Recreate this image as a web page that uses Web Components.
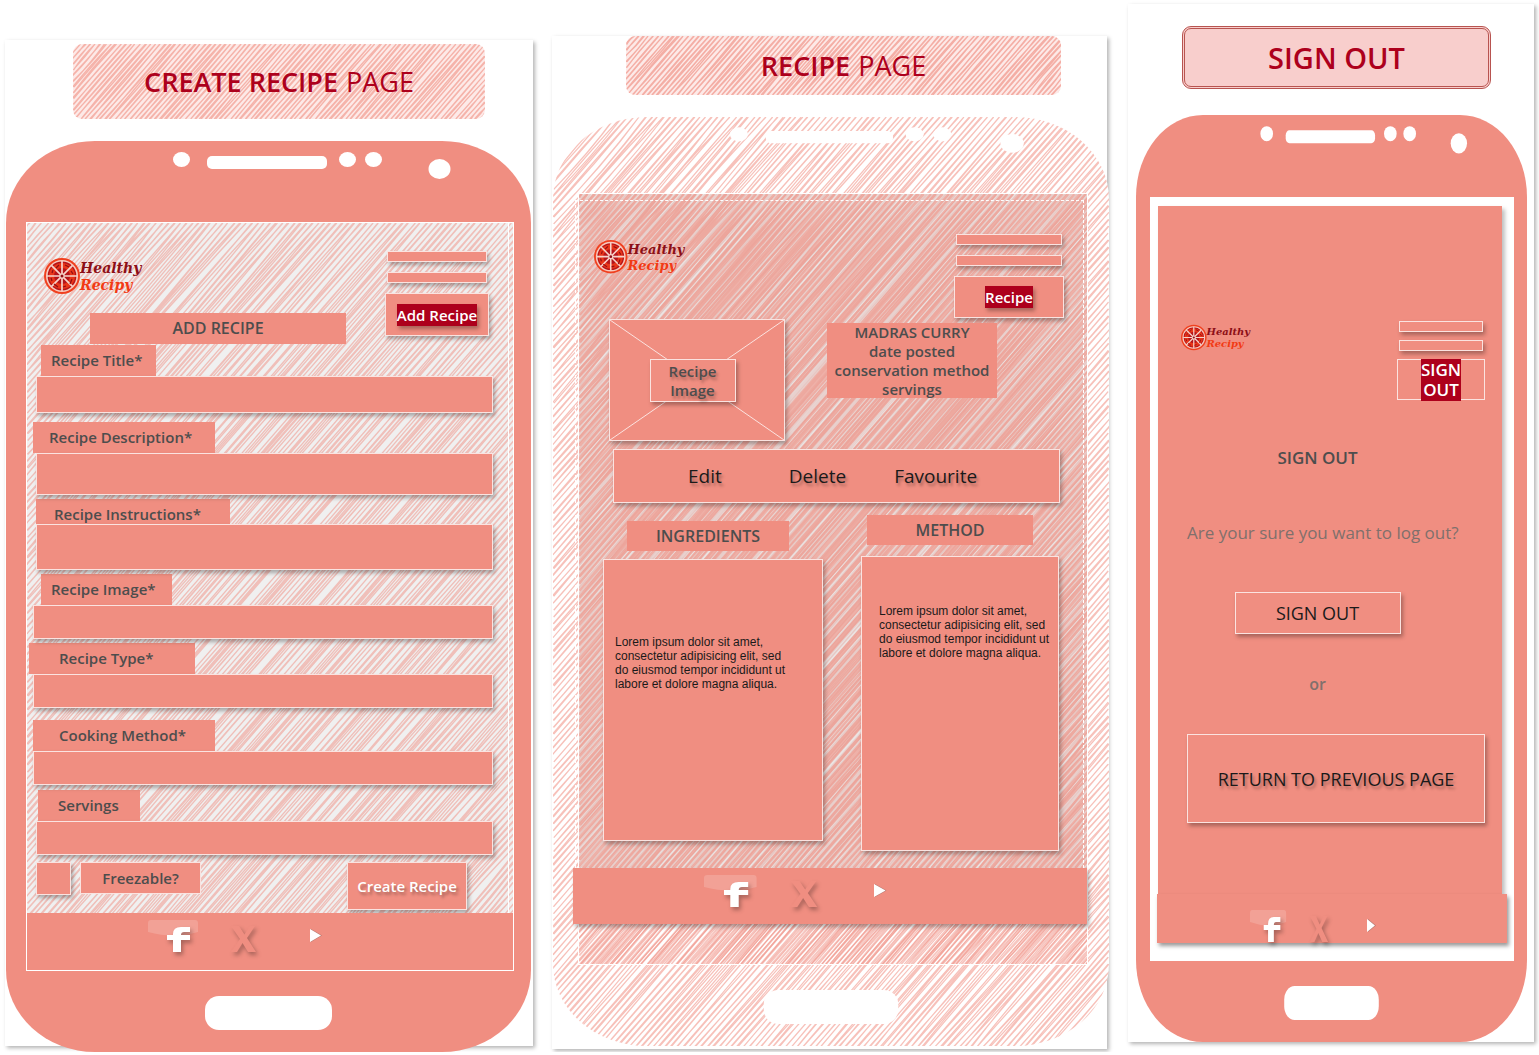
<!DOCTYPE html>
<html lang="en">
<head>
<meta charset="utf-8">
<title>Healthy Recipy wireframes</title>
<style>
  :root {
    --salmon: #f08e81;
    --red: #ad001c;
    --ink: #4d4d4d;
    --line: #fbe3e0;
    --drop: 2px 3px 4px rgba(0, 0, 0, .3);
    --text-drop: 2px 3px 3px rgba(0, 0, 0, .3);
  }
  body { margin: 0; background: #fff; font-family: "Open Sans", "Noto Sans", sans-serif; color: var(--ink); }
  main { display: grid; grid-template-columns: minmax(0, 542fr) minmax(0, 580fr) minmax(0, 417fr); align-items: start; }
</style>
</head>
<body>
<main>
  <create-board></create-board>
  <recipe-board></recipe-board>
  <signout-board></signout-board>
</main>

<script>
const define = (name, html, setup) => {
  const template = document.createElement('template');
  template.innerHTML = html;
  customElements.define(name, class extends HTMLElement {
    constructor() {
      super();
      this.attachShadow({ mode: 'open' }).append(template.content.cloneNode(true));
    }
    connectedCallback() { if (setup) setup(this, this.shadowRoot); }
  });
};

/* Sketchy diagonal shading that fills its positioned parent. */
define('hatch-fill', `
  <style>
    :host { position: absolute; inset: 0; overflow: hidden; border-radius: inherit; display: block; z-index: 0; pointer-events: none; }
    svg { width: 100%; height: 100%; display: block; }
  </style>
  <svg aria-hidden="true" fill="none" preserveAspectRatio="xMinYMin slice"><path/></svg>`,
  (host, root) => {
    const num = (name, fallback) => Number(host.getAttribute(name) || fallback);
    const w = num('w', 400), h = num('h', 80), step = num('step', 5), strokes = num('strokes', 2);
    let seed = num('seed', 7);
    const rnd = () => { seed = (seed * 16807) % 2147483647; return seed / 2147483647 - 0.5; };
    const slope = 0.87;
    const svg = root.querySelector('svg'), path = root.querySelector('path');
    svg.setAttribute('viewBox', `0 0 ${w} ${h}`);
    let d = '';
    for (let c = step / 2; c < w + h * slope; c += step) {
      const top = c > w ? (c - w) / slope : 0;
      const bottom = Math.min(h, c / slope);
      const x1 = c - top * slope, x2 = c - bottom * slope;
      const bow = Math.min(num('bow', 16), (bottom - top) / 10 + 2);
      for (let k = 0; k < strokes; k++) {
        const a = [x1 + rnd() * 2, top], b = [x2 + rnd() * 2, bottom];
        const m = [(x1 + x2) / 2 + rnd() * bow, (top + bottom) / 2];
        d += `M${a[0].toFixed(1)} ${a[1].toFixed(1)}Q${m[0].toFixed(1)} ${m[1].toFixed(1)} ${b[0].toFixed(1)} ${b[1].toFixed(1)}`;
      }
    }
    path.setAttribute('d', d);
    path.setAttribute('stroke', '#f08e81');
    path.setAttribute('stroke-width', host.getAttribute('weight') || '1');
    path.setAttribute('stroke-opacity', host.getAttribute('alpha') || '.7');
  });

/* Sheet of paper behind one mock-up. */
define('paper-sheet', `
  <style>
    :host { display: block; position: relative; padding: var(--pad); z-index: 0; }
    .sheet { position: absolute; inset: var(--sheet); background: #fff; box-shadow: 2px 2px 4px rgba(0,0,0,.3); z-index: -1; }
  </style>
  <div class="sheet"></div><slot></slot>`);

define('page-title', `
  <style>
    :host { display: block; position: relative; border-radius: 9px; margin: var(--m); }
    slot { border-radius: inherit; }
    h1 { position: relative; z-index: 1; margin: 0; height: var(--h); display: flex; align-items: center; justify-content: center; gap: 8px;
         font-size: var(--fs, 27px); font-weight: 400; line-height: 32px; color: var(--red); white-space: nowrap; }
    ::slotted(b) { font-weight: 600; }
  </style>
  <slot name="fill"></slot><h1><slot></slot></h1>`);

define('phone-frame', `
  <style>
    :host { display: block; position: relative; background: var(--body, var(--salmon)); border-radius: var(--rx) / 82px; }
    slot { border-radius: inherit; }
    .part { position: relative; z-index: 1; display: block; width: 100%; }
    .screen { position: relative; z-index: 1; margin: 0 var(--right) 0 var(--left); }
  </style>
  <slot name="fill"></slot>
  <svg class="part" id="top" viewBox="0 0 525 81" preserveAspectRatio="none" fill="#fff" aria-hidden="true">
    <ellipse cx="175.5" cy="18.5" rx="8.5" ry="7.5"/><rect x="201" y="15" width="120" height="13" rx="5"/>
    <ellipse cx="341.5" cy="18.5" rx="8.5" ry="7.5"/><ellipse cx="367.5" cy="18.5" rx="8.5" ry="7.5"/>
    <ellipse cx="433.5" cy="28" rx="11" ry="10"/>
  </svg>
  <div class="screen"><slot></slot></div>
  <svg class="part" viewBox="0 0 525 81" preserveAspectRatio="none" height="81" fill="#fff" aria-hidden="true">
    <rect x="199" y="25" width="127" height="34" rx="14"/>
  </svg>`,
  (host, root) => root.querySelector('#top').setAttribute('height', host.getAttribute('top') || 81));

define('site-logo', `
  <style>
    :host { display: block; width: var(--w, 100px); }
    svg { display: block; width: 100%; overflow: visible; }
    text { font: italic 700 14px "DejaVu Serif", serif; }
  </style>
  <svg viewBox="0 0 100 38" role="img" aria-label="Healthy Recipy">
    <circle cx="18" cy="19" r="18" fill="#f0401f"/><circle cx="18" cy="19" r="16" fill="#f7c9bd"/>
    <circle cx="18" cy="19" r="14.4" fill="#b5141a"/>
    <circle cx="18" cy="19" r="10.5" fill="none" stroke="#e8361a" stroke-width="5"/>
    <g stroke="#f7d3ca" stroke-width="1.7">
      <path d="M18 4v30M3 19h30M7.4 8.4l21.2 21.2M28.6 8.4L7.4 29.6"/>
    </g>
    <g fill="none" stroke="#8f0d14" stroke-width="1.2">
      <path d="M12 11l3-3M21 8l4 2M27 14l2 3M28 22l-2 5M22 29l-3 1M14 30l-4-3M8 24l-1-3M8 16l1-3"/>
    </g>
    <circle cx="18" cy="19" r="2.6" fill="#f7d3ca"/><circle cx="18" cy="19" r="1.5" fill="#8f0d14"/>
    <text x="36" y="16" fill="#8c0f17">Healthy</text>
    <text x="36" y="33" fill="#f23a14">Recipy</text>
  </svg>`);

define('nav-stack', `
  <style>
    :host { display: block; width: var(--w); }
    nav { display: flex; flex-direction: column; gap: var(--g, 10px); }
    a { box-sizing: border-box; border: 1px solid var(--line); background: var(--salmon); box-shadow: var(--drop); }
    .bar { height: 11px; margin: 0 2px; }
    .here { height: var(--h, 44px); display: flex; align-items: center; justify-content: center; text-align: center; text-decoration: none;
            color: #fff; font-size: var(--fs, 15px); font-weight: 600; line-height: 20px; box-shadow: var(--here-drop, var(--drop)); }
    span { background: var(--red); padding: 1px 0; box-shadow: var(--here-drop, var(--drop)); }
  </style>
  <nav><a class="bar" href="#home" aria-label="Home"></a><a class="bar" href="#list" aria-label="Recipes"></a>
  <a class="here" href="#here"><span><slot></slot></span></a></nav>`);

define('name-tag', `
  <style>
    :host { display: block; background: var(--salmon); text-align: center; font-size: 16px; font-weight: 600; line-height: 31px; }
    h2 { margin: 0; font: inherit; }
  </style>
  <h2><slot></slot></h2>`);

define('form-field', `
  <style>
    :host { display: block; margin: var(--gap) 20px 0 6px; }
    label { display: block; box-sizing: border-box; width: var(--lw); height: var(--lh, 31px); margin-left: var(--lx, 0px); padding-left: var(--tx);
            background: var(--salmon); font-size: 15px; font-weight: 600; line-height: 31px; white-space: nowrap; }
    .box { padding-left: var(--ix, 0px); }
    input { display: block; box-sizing: border-box; width: 100%; height: var(--ih, 34px); margin: 0; padding: 0 10px; position: relative;
            border: 1px solid var(--line); background: var(--salmon); box-shadow: var(--drop); font: inherit; color: var(--ink); outline: 0; }
  </style>
  <label for="f"></label><div class="box"><input id="f" type="text"></div>`,
  (host, root) => { root.querySelector('label').textContent = host.getAttribute('label'); });

define('social-strip', `
  <style>
    :host { display: block; position: relative; background: var(--salmon); box-shadow: var(--strip-drop, none); }
    footer { box-sizing: border-box; height: var(--h); padding: var(--pt, 7px) 0 0 var(--pl); }
    div { display: grid; grid-template-columns: 50fr 33fr 26fr 53fr 11fr; width: var(--w, 173px); height: 33px; }
    a { display: block; }
    a:nth-child(2) { grid-column: 3; } a:nth-child(3) { grid-column: 5; }
    svg { display: block; width: 100%; height: 33px; overflow: visible; filter: drop-shadow(2px 3px 2px rgba(0,0,0,.3)); }
    .tri { filter: drop-shadow(1px 0 0 rgba(90,90,90,.4)); }
    .gloss { filter: none; }
    a:first-child { display: grid; } a:first-child svg { grid-area: 1 / 1; }
  </style>
  <footer><div>
    <a href="#facebook" aria-label="Facebook">
      <svg class="gloss" viewBox="0 0 50 33" preserveAspectRatio="none"><path d="M3 0h44q3 0 3 3v9Q26 19 0 12V3q0-3 3-3z" fill="#fff" fill-opacity=".17"/></svg>
      <svg viewBox="0 0 50 33" preserveAspectRatio="none"><path d="M25 32V20h-6v-5h6v-1q0-7 8-7h9v5h-6q-3 0-3 3h9v5h-9v12z" fill="#fff"/></svg></a>
    <a href="#x" aria-label="X"><svg viewBox="0 0 26 33" preserveAspectRatio="none">
      <path d="M0 6h8l5.5 8.5L19 6h5l-8 12 9 14h-8l-5.5-9L6 32H0l9-13z" fill="#f08e81"/></svg></a>
    <a href="#play" aria-label="Play"><svg class="tri" viewBox="0 0 11 33" preserveAspectRatio="none">
      <path d="M0 9v13l11-6.5z" fill="#fff"/></svg></a>
  </div></footer>`);

define('create-board', `
  <style>
    :host { display: block; }
    paper-sheet { --pad: 44px 11px 0 6px; --sheet: 40px 9px 6px 5px; }
    page-title { --m: 0 46px 22px 67px; --h: 75px; background: #fdeae8; }
    phone-frame { --rx: 89px; --left: 20px; --right: 17px; }
    .screen { position: relative; border: 1px solid #fff; background: #f0f0f0; }
    .rule { position: absolute; top: 0; bottom: 0; right: 4px; border-right: 1px solid #fff; }
    .content { position: relative; z-index: 1; }
    header { display: flex; justify-content: space-between; align-items: flex-start; padding: 28px 24px 0 17px; height: 93px; }
    .left { padding-top: 6px; }
    name-tag { width: 256px; margin: 18px 0 0 46px; }
    nav-stack { --w: 104px; --h: 43px; }
    .last { display: flex; align-items: flex-start; gap: 9px; padding: 7px 46px 0 9px; height: 51px; box-sizing: border-box; margin-bottom: 7px; }
    .last > * { box-sizing: border-box; border: 1px solid var(--line); background: var(--salmon); font-size: 15px; font-weight: 600; }
    input { appearance: none; width: 35px; height: 33px; margin: 0; box-shadow: var(--drop); }
    label { width: 121px; line-height: 30px; text-align: center; }
    button { margin: 0 0 0 auto; width: 120px; height: 48px; padding: 0; font-family: inherit; color: #fff; box-shadow: var(--drop); text-shadow: var(--text-drop); white-space: nowrap; }
  </style>
  <paper-sheet>
    <page-title><hatch-fill slot="fill" w="412" h="75" step="5" weight="1.3" alpha=".6" bow="6" seed="11"></hatch-fill><b>CREATE RECIPE</b><span>PAGE</span></page-title>
    <phone-frame>
      <div class="screen">
        <hatch-fill w="486" h="746" step="6" weight="1.3" alpha=".5" bow="20" seed="23"></hatch-fill>
        <div class="rule"></div>
        <div class="content">
          <header><div class="left"><site-logo></site-logo><name-tag>ADD RECIPE</name-tag></div><nav-stack>Add Recipe</nav-stack></header>
          <form-field label="Recipe Title*" style="--gap:1px;--lw:115px;--lx:8px;--tx:10px;--ix:3px;--ih:37px"></form-field>
          <form-field label="Recipe Description*" style="--gap:9px;--lw:182px;--tx:16px;--ix:3px;--ih:42px"></form-field>
          <form-field label="Recipe Instructions*" style="--gap:4px;--lw:194px;--lx:3px;--tx:18px;--lh:25px;--ix:3px;--ih:46px"></form-field>
          <form-field label="Recipe Image*" style="--gap:4px;--lw:131px;--lx:8px;--tx:10px"></form-field>
          <form-field label="Recipe Type*" style="--gap:4px;--lw:166px;--lx:-4px;--tx:30px"></form-field>
          <form-field label="Cooking Method*" style="--gap:12px;--lw:182px;--tx:26px"></form-field>
          <form-field label="Servings" style="--gap:5px;--lw:102px;--lx:5px;--tx:20px;--ix:3px"></form-field>
          <div class="last"><input type="checkbox" id="freeze"><label for="freeze">Freezable?</label><button type="button">Create Recipe</button></div>
          <social-strip style="--h:57px;--pl:121px"></social-strip>
        </div>
      </div>
    </phone-frame>
  </paper-sheet>`);

define('recipe-board', `
  <style>
    :host { display: block; }
    paper-sheet { --pad: 36px 13px 0 11px; --sheet: 36px 15px -3px 10px; }
    page-title { --m: 0 48px 22px 73px; --h: 59px; background: #fdeae8; }
    phone-frame { --rx: 94px; --left: 25px; --right: 21px; --body: #fff; }
    .screen { position: relative; border: 1px solid #fff; padding-bottom: 40px; }
    .panel { position: relative; background: rgba(225, 215, 214, .65); }
    .rule { position: absolute; inset: 6px 3px 0 -4px; border: 1px dashed #fff; border-bottom: 0; }
    .content { position: relative; z-index: 1; padding-bottom: 17px; }
    header { display: flex; justify-content: space-between; align-items: flex-start; padding: 40px 23px 0 15px; }
    site-logo { --w: 93px; padding-top: 5px; }
    nav-stack { --w: 110px; --h: 42px; }
    .intro { display: flex; align-items: flex-start; gap: 42px; padding: 1px 30px 0; }
    .image { position: relative; width: 176px; height: 122px; box-sizing: border-box; border: 1px solid var(--line); background: var(--salmon); box-shadow: var(--drop);
             display: grid; place-items: center; }
    .image svg { grid-area: 1 / 1; width: 100%; height: 120px; }
    .image p { grid-area: 1 / 1; margin: 0 9px 0 0; box-sizing: border-box; width: 86px; height: 43px; padding-top: 2px; border: 1px solid var(--line); background: var(--salmon); box-shadow: var(--drop);
             text-align: center; font-size: 15px; font-weight: 600; line-height: 19px; text-shadow: var(--text-drop); position: relative; }
    .facts { margin: 4px 0 0; width: 170px; height: 75px; background: var(--salmon); text-align: center; font-size: 15px; font-weight: 600; line-height: 19px; white-space: nowrap; display: flex; flex-direction: column; align-items: center; }
    .actions { margin: 8px 27px 12px 34px; height: 54px; box-sizing: border-box; border: 1px solid var(--line); background: var(--salmon); box-shadow: var(--drop);
               display: flex; align-items: center; gap: 48px; padding-left: 74px; }
    .actions button { border: 0; background: none; padding: 0; font-family: inherit; font-size: 19px; line-height: 24px; color: #1a1a1a; text-shadow: var(--text-drop); }
    .actions button:first-child { margin-right: 19px; }
    .cols { display: grid; grid-template-columns: 220fr 198fr; gap: 38px; margin: 0 28px 0 24px; align-items: start; }
    .cols > :first-child { padding-top: 6px; }
    name-tag { margin: 0 34px 8px 24px; line-height: 30px; }
    .cols > :last-child name-tag { margin: 0 26px 11px 6px; }
    .card { box-sizing: border-box; border: 1px solid var(--line); background: var(--salmon); box-shadow: var(--drop);
            font: 12px/14px "Liberation Sans", sans-serif; color: #1a1a1a; }
    .card p { margin: 0; width: 174px; }
    .one { height: 282px; padding: 75px 0 0 11px; } .two { height: 295px; padding: 47px 0 0 17px; }
    social-strip { --h: 56px; --pl: 131px; --w: 182px; --strip-drop: var(--drop); margin-left: -6px; z-index: 1; }
  </style>
  <paper-sheet>
    <page-title><hatch-fill slot="fill" w="436" h="59" step="5" weight="1.3" alpha=".65" bow="6" seed="31"></hatch-fill><b>RECIPE</b><span>PAGE</span></page-title>
    <phone-frame top="76">
      <hatch-fill slot="fill" w="556" h="931" step="6" weight="1.2" alpha=".55" bow="20" seed="91"></hatch-fill>
      <div class="screen">
        <hatch-fill w="510" h="770" step="5" weight="1.5" alpha=".5" bow="16" seed="53"></hatch-fill>
        <div class="panel">
          <hatch-fill w="510" h="674" step="6" weight="2.2" alpha=".6" bow="16" seed="71"></hatch-fill>
          <div class="rule"></div>
          <div class="content">
            <header><site-logo></site-logo><nav-stack>Recipe</nav-stack></header>
            <section class="intro">
              <div class="image"><svg viewBox="0 0 174 120" preserveAspectRatio="none" stroke="#fbe3e0" aria-hidden="true"><path d="M0 0L174 120M174 0L0 120"/></svg><p>Recipe<br>Image</p></div>
              <div class="facts"><span>MADRAS CURRY</span><span>date posted</span><span>conservation method</span><span>servings</span></div>
            </section>
            <div class="actions"><button type="button">Edit</button><button type="button">Delete</button><button type="button">Favourite</button></div>
            <div class="cols">
              <section><name-tag>INGREDIENTS</name-tag><div class="card one"><p>Lorem ipsum dolor sit amet, consectetur adipisicing elit, sed do eiusmod tempor incididunt ut labore et dolore magna aliqua.</p></div></section>
              <section><name-tag>METHOD</name-tag><div class="card two"><p>Lorem ipsum dolor sit amet, consectetur adipisicing elit, sed do eiusmod tempor incididunt ut labore et dolore magna aliqua.</p></div></section>
            </div>
          </div>
        </div>
        <social-strip></social-strip>
      </div>
    </phone-frame>
  </paper-sheet>`);

define('signout-board', `
  <style>
    :host { display: block; }
    paper-sheet { --pad: 26px 12px 0 14px; --sheet: 4px 5px 0 6px; }
    page-title { --m: 0 36px 26px 46px; --h: 57px; --fs: 29px; border: 3px double #b85450; background: #f8cecc; }
    phone-frame { --rx: 67px; --left: 14px; --right: 13px; }
    .screen { background: #fff; padding: 9px 7px 18px; }
    .panel { background: var(--salmon); margin: 0 5px 0 1px; padding: 115px 17px 71px 23px; box-shadow: 3px 3px 4px rgba(0,0,0,.25); }
    header { display: flex; justify-content: space-between; align-items: flex-start; }
    site-logo { --w: 71px; padding-top: 3px; }
    nav-stack { --w: 88px; --h: 41px; --g: 8px; --fs: 17px; --here-drop: none; }
    .ask { display: flex; flex-direction: column; align-items: center; padding: 0 37px 0 6px; line-height: 20px; font-size: 17px; }
    h2 { margin: 48px 0 55px; font-size: 17px; line-height: 20px; font-weight: 600; }
    p { margin: 0; color: #80706c; white-space: nowrap; }
    .ask p:first-of-type { align-self: flex-start; }
    .ask .or { font-size: 16px; font-weight: 600; margin: 40px 0; }
    button { box-sizing: border-box; border: 1px solid var(--line); background: var(--salmon); box-shadow: var(--drop); padding: 0;
             font-family: inherit; font-size: 18px; color: #1a1a1a; text-shadow: var(--text-drop); }
    .out { width: 166px; height: 42px; margin-top: 49px; text-shadow: none; }
    .back { display: block; width: calc(100% - 6px); height: 89px; margin-left: 6px; white-space: nowrap; }
    social-strip { --h: 49px; --pl: 93px; --pt: 16px; --w: 125px; --strip-drop: 2px 3px 4px rgba(0,0,0,.4); }
  </style>
  <paper-sheet>
    <page-title><b>SIGN OUT</b></page-title>
    <phone-frame top="82">
      <div class="screen">
        <div class="panel">
          <header><site-logo></site-logo><nav-stack>SIGN<br>OUT</nav-stack></header>
          <div class="ask"><h2>SIGN OUT</h2><p>Are your sure you want to log out?</p><button class="out" type="button">SIGN OUT</button><p class="or">or</p></div>
          <button class="back" type="button">RETURN TO PREVIOUS PAGE</button>
        </div>
        <social-strip></social-strip>
      </div>
    </phone-frame>
  </paper-sheet>`);
</script>
</body>
</html>
